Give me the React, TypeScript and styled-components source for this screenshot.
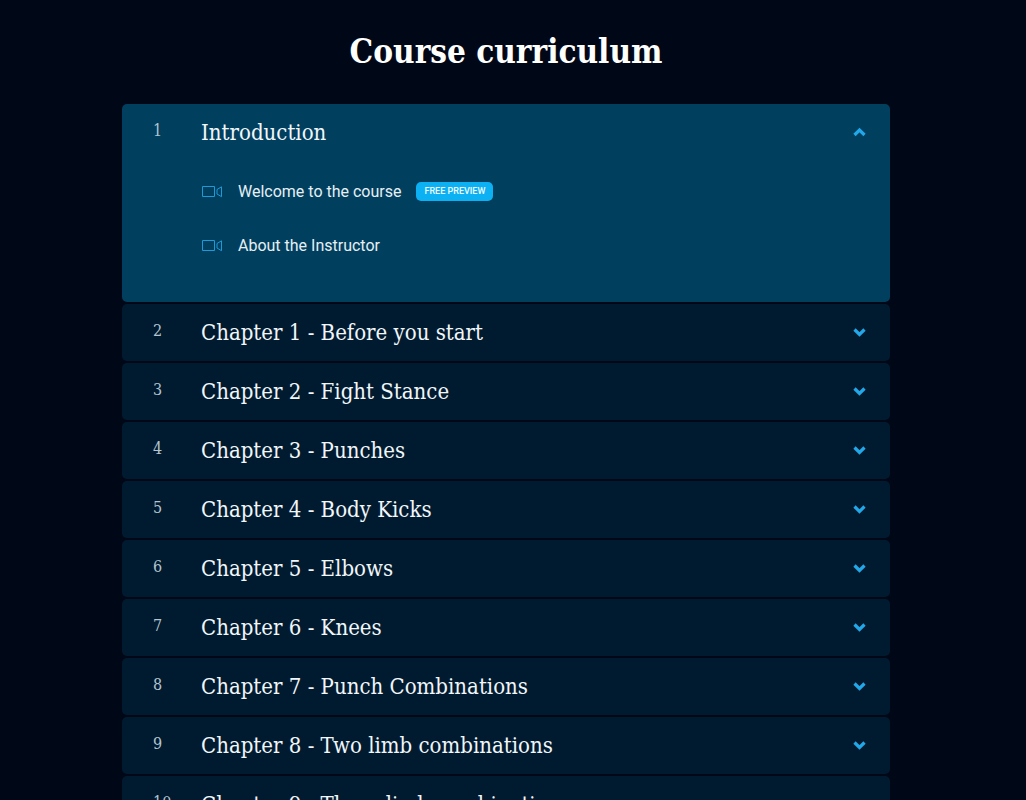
import React, { useState } from "react";
import styled, { createGlobalStyle } from "styled-components";

const slab = `"Roboto Slab", "DejaVu Serif Condensed", "DejaVu Serif", serif`;

const GlobalStyle = createGlobalStyle`
  *, *::before, *::after { box-sizing: border-box; }
  body {
    margin: 0;
    background: #000817;
    color: #f1f6fa;
    font-family: Roboto, "Liberation Sans", sans-serif;
  }
`;

const Page = styled.main`
  padding: 28px 14px 28px 0;
`;

const Container = styled.div`
  width: 100%;
  max-width: 768px;
  margin: 0 auto;
`;

const Heading = styled.h1`
  margin: 0 0 28px;
  font: 700 33px/48px ${slab};
  text-align: center;
  color: #ffffff;
`;

const Chapters = styled.div`
  display: flex;
  flex-direction: column;
  gap: 2px;
`;

const Card = styled.section<{ $open: boolean }>`
  border-radius: 5px;
  background: ${(p) => (p.$open ? "#003f5e" : "#001b2f")};
`;

const CardTitle = styled.h2`
  margin: 0;
  font: inherit;
`;

const Toggle = styled.button`
  display: grid;
  grid-template-columns: 48px 1fr auto;
  align-items: center;
  width: 100%;
  height: 57px;
  padding: 0 23px 0 31px;
  border: 0;
  background: none;
  color: inherit;
  text-align: left;
  cursor: pointer;
`;

const Index = styled.span`
  padding-bottom: 3px;
  font: 400 16px/20px ${slab};
  color: #b3c3cf;
`;

const Name = styled.span`
  font: 400 22px/28px ${slab};
`;

const Lessons = styled.ul`
  margin: 0;
  padding: 3px 31px 30px 80px;
  list-style: none;
`;

const Lesson = styled.li`
  display: flex;
  align-items: center;
  height: 54px;
  gap: 15px;
  font-size: 16px;
  line-height: 24px;
`;

const LessonLink = styled.a`
  display: flex;
  align-items: center;
  gap: 15px;
  padding-top: 2px;
  color: #e6eff5;
  text-decoration: none;
`;

const Badge = styled.span`
  padding: 0 8px;
  border-radius: 5px;
  background: #0bb1f3;
  color: #f3fbff;
  font-size: 9px;
  font-weight: 500;
  line-height: 19px;
`;

const Camera = () => (
  <svg width="21" height="12" viewBox="0 0 21 12" fill="none" stroke="#1c9bd8" aria-hidden="true">
    <path d="M.5 .5h12v10H.5zM19.500 .8v9.900L15 8V3.500z" />
  </svg>
);

const Chevron = ({ up }: { up: boolean }) => (
  <svg width="15" height="11" viewBox="0 0 15 11" fill="none" stroke="#22a7e8" strokeWidth="3.200" aria-hidden="true">
    <path d={up ? "M2.500 8l5-5 5 5" : "M2.500 2.500l5 5 5-5"} />
  </svg>
);

type Chapter = { name: string; lessons: { name: string; free?: boolean }[] };

const chapters: Chapter[] = [
  {
    name: "Introduction",
    lessons: [{ name: "Welcome to the course", free: true }, { name: "About the Instructor" }],
  },
  { name: "Chapter 1 - Before you start", lessons: [] },
  { name: "Chapter 2 - Fight Stance", lessons: [] },
  { name: "Chapter 3 - Punches", lessons: [] },
  { name: "Chapter 4 - Body Kicks", lessons: [] },
  { name: "Chapter 5 - Elbows", lessons: [] },
  { name: "Chapter 6 - Knees", lessons: [] },
  { name: "Chapter 7 - Punch Combinations", lessons: [] },
  { name: "Chapter 8 - Two limb combinations", lessons: [] },
  { name: "Chapter 9 - Three limb combinations", lessons: [] },
];

export default function App() {
  const [openIndex, setOpenIndex] = useState(0);
  return (
    <>
      <GlobalStyle />
      <Page>
        <Container>
          <Heading>Course curriculum</Heading>
          <Chapters>
            {chapters.map((chapter, i) => {
              const open = i === openIndex;
              return (
                <Card key={chapter.name} $open={open}>
                  <CardTitle>
                    <Toggle type="button" aria-expanded={open} onClick={() => setOpenIndex(open ? -1 : i)}>
                      <Index>{i + 1}</Index>
                      <Name>{chapter.name}</Name>
                      <Chevron up={open} />
                    </Toggle>
                  </CardTitle>
                  {open && (
                    <Lessons>
                      {chapter.lessons.map((lesson) => (
                        <Lesson key={lesson.name}>
                          <LessonLink href="#">
                            <Camera />
                            {lesson.name}
                          </LessonLink>
                          {lesson.free && <Badge>FREE PREVIEW</Badge>}
                        </Lesson>
                      ))}
                    </Lessons>
                  )}
                </Card>
              );
            })}
          </Chapters>
        </Container>
      </Page>
    </>
  );
}
